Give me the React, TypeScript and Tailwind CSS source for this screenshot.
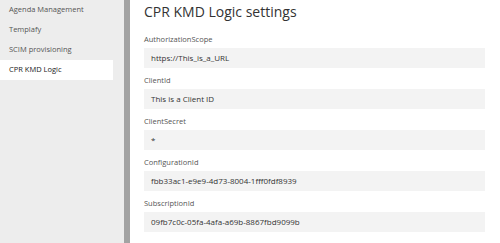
const menu = ["Agenda Management", "Templafy", "SCIM provisioning", "CPR KMD Logic"];

const fields = [
  { label: "AuthorizationScope", value: "https://This_is_a_URL" },
  { label: "ClientId", value: "This is a Client ID" },
  { label: "ClientSecret", value: "*" },
  { label: "ConfigurationId", value: "fbb33ac1-e9e9-4d73-8004-1fff0fdf8939" },
  { label: "SubscriptionId", value: "09fb7c0c-05fa-4afa-a69b-8867fbd9099b" },
];

export default function App() {
  return (
    <div className="flex h-[243px] w-[500px] overflow-hidden bg-white font-['Open_Sans',sans-serif]">
      <nav className="flex w-[124px] flex-col bg-[#ededed]">
        {menu.map((item) => (
          <div
            key={item}
            className={
              item === "CPR KMD Logic"
                ? "flex h-5 w-[113px] items-center bg-white pl-[9px] text-[7.5px] text-[#222]"
                : "flex h-5 w-[113px] items-center pl-[9px] text-[7.5px] text-[#555]"
            }
          >
            {item}
          </div>
        ))}
      </nav>
      <div className="w-[6px] bg-[#a3a3a3]"></div>
      <main className="flex-1 pl-[14px] pr-[15px]">
        <h1 className="mt-[2px] h-[20px] text-[14px] leading-[20px] text-[#333]">CPR KMD Logic settings</h1>
        <div className="mt-[9px] flex flex-col gap-[4px]">
          {fields.map((f) => (
            <div key={f.label} className="flex flex-col">
              <label className="h-[17px] text-[7.5px] leading-[16px] text-[#555]">{f.label}</label>
              <div className="flex h-5 items-center bg-[#f3f3f3] pl-[7px] text-[8px] text-[#333]">{f.value}</div>
            </div>
          ))}
        </div>
      </main>
    </div>
  );
}
